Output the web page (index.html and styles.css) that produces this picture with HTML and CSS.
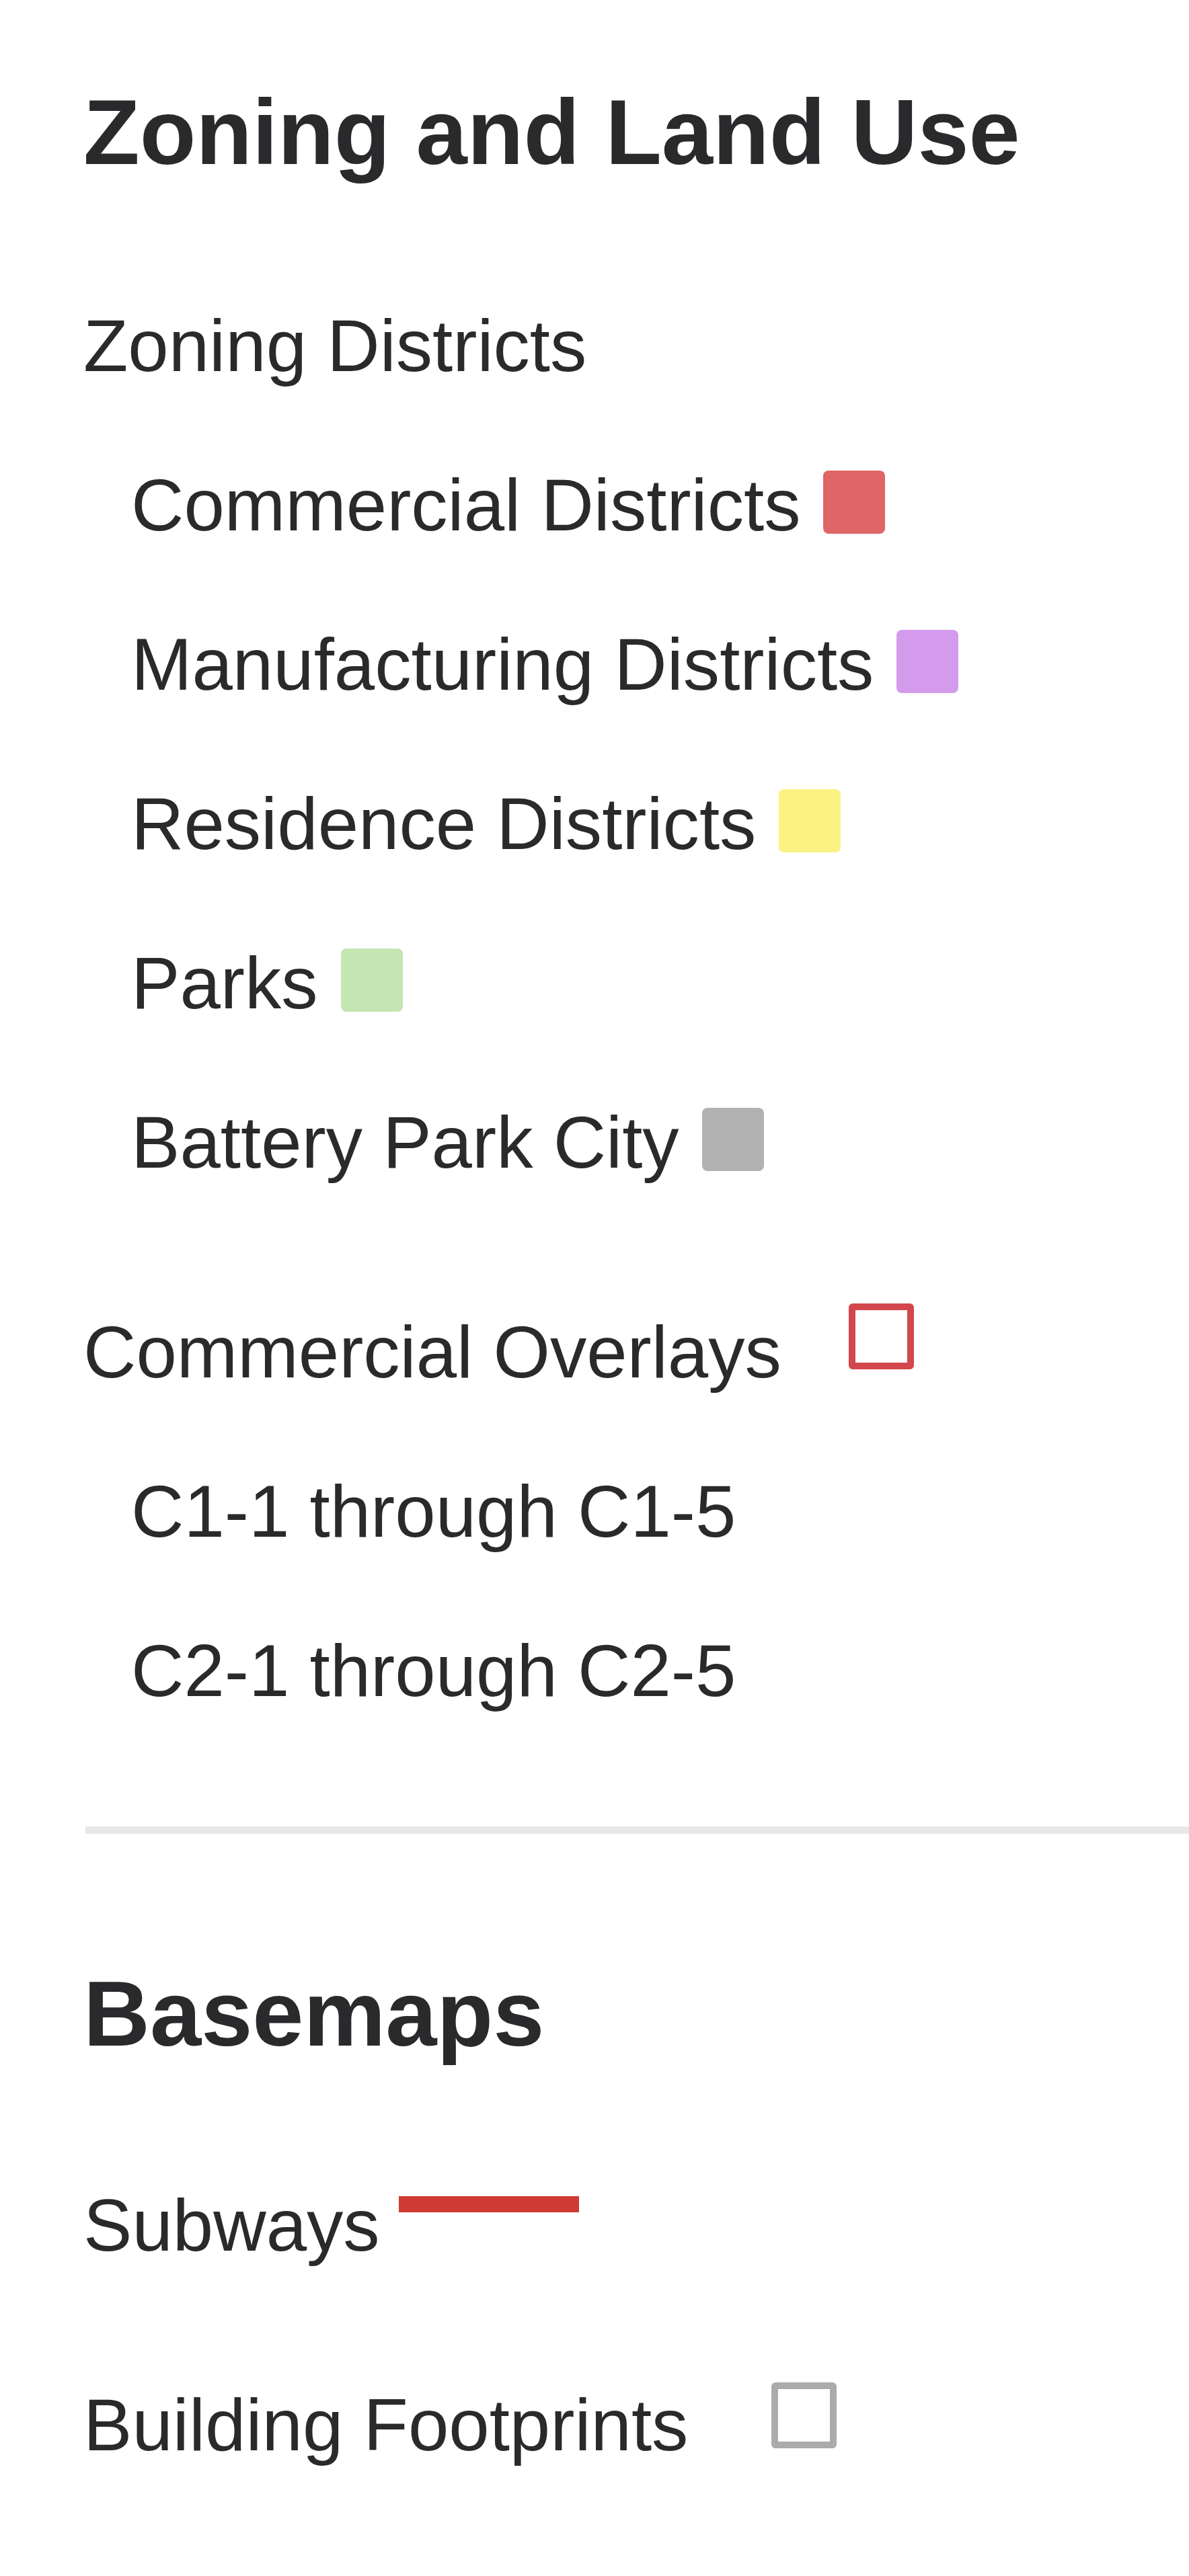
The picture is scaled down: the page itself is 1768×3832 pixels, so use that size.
FILE: index.html
```html
<!DOCTYPE html>
<html lang="en">
<head>
<meta charset="utf-8">
<title>Zoning and Land Use</title>
<link rel="stylesheet" href="styles.css">
</head>
<body>
<div class="panel">
  <h2 class="title">Zoning and Land Use</h2>
  <div class="group">
    <div class="row">Zoning Districts</div>
    <div class="row sub">Commercial Districts<span class="swatch commercial"></span></div>
    <div class="row sub">Manufacturing Districts<span class="swatch manufacturing"></span></div>
    <div class="row sub">Residence Districts<span class="swatch residence"></span></div>
    <div class="row sub">Parks<span class="swatch parks"></span></div>
    <div class="row sub">Battery Park City<span class="swatch battery"></span></div>
  </div>
  <div class="group overlays">
    <div class="row">Commercial Overlays<span class="outline overlay"></span></div>
    <div class="row sub">C1-1 through C1-5</div>
    <div class="row sub">C2-1 through C2-5</div>
  </div>
  <div class="divider"></div>
  <h2 class="title basemaps">Basemaps</h2>
  <div class="row subways">Subways<span class="line"></span></div>
  <div class="row footprints">Building Footprints<span class="outline building"></span></div>
</div>
</body>
</html>
```

FILE: styles.css
```css
html, body {
  margin: 0;
  padding: 0;
  background: #ffffff;
}
body {
  font-family: "Liberation Sans", Arial, Helvetica, sans-serif;
  color: #2a2a2c;
}
.panel {
  padding: 117px 0 120px 124px;
}
.title {
  margin: 0;
  font-size: 137px;
  font-weight: bold;
  line-height: 160px;
  white-space: nowrap;
}
.group {
  margin-top: 119px;
}
.overlays {
  margin-top: 75px;
}
.row {
  font-size: 108.6px;
  line-height: 237px;
  height: 237px;
  white-space: nowrap;
}
.sub {
  padding-left: 71px;
}
.swatch {
  display: inline-block;
  width: 92px;
  height: 94px;
  margin-left: 34px;
  border-radius: 8px;
  vertical-align: -5px;
}
.commercial { background: #df6566; }
.manufacturing { background: #d49bed; }
.residence { background: #fcf284; }
.parks { background: #c4e6b3; }
.battery { background: #b2b2b2; }
.outline {
  display: inline-block;
  box-sizing: border-box;
  width: 97px;
  height: 98px;
  border-radius: 6px;
  background: #ffffff;
}
.overlay {
  border: 10px solid #d2474c;
  margin-left: 100px;
  vertical-align: 12px;
}
.building {
  border: 10px solid #ababab;
  margin-left: 124px;
  vertical-align: 3px;
}
.divider {
  height: 11px;
  background: #e8e8ea;
  margin-top: 113px;
  margin-left: 3px;
}
.basemaps {
  margin-top: 188px;
}
.subways {
  margin-top: 116px;
}
.line {
  display: inline-block;
  width: 268px;
  height: 24px;
  margin-left: 28px;
  background: #cf3a35;
  vertical-align: 57px;
}
.footprints {
  margin-top: 60px;
}
```
